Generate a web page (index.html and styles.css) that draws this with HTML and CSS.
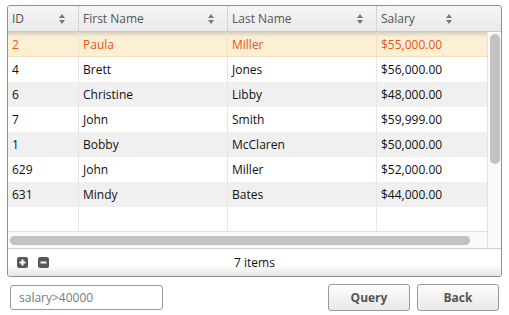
FILE: index.html
```html
<!DOCTYPE html>
<html lang="en">
<head>
    <meta charset="UTF-8">
    <title>Employees</title>
    <link rel="stylesheet" href="styles.css">
</head>
<body>

<div class="grid">
    <div class="grid-header">
        <div class="cell col-id">ID <span class="sort"></span></div>
        <div class="cell col-first">First Name <span class="sort"></span></div>
        <div class="cell col-last">Last Name <span class="sort"></span></div>
        <div class="cell col-salary last">Salary <span class="sort"></span></div>
    </div>
    <div class="grid-body">
        <div class="rows">
            <div class="row selected">
                <div class="cell col-id">2</div>
                <div class="cell col-first">Paula</div>
                <div class="cell col-last">Miller</div>
                <div class="cell col-salary">$55,000.00</div>
            </div>
            <div class="row">
                <div class="cell col-id">4</div>
                <div class="cell col-first">Brett</div>
                <div class="cell col-last">Jones</div>
                <div class="cell col-salary">$56,000.00</div>
            </div>
            <div class="row alt">
                <div class="cell col-id">6</div>
                <div class="cell col-first">Christine</div>
                <div class="cell col-last">Libby</div>
                <div class="cell col-salary">$48,000.00</div>
            </div>
            <div class="row">
                <div class="cell col-id">7</div>
                <div class="cell col-first">John</div>
                <div class="cell col-last">Smith</div>
                <div class="cell col-salary">$59,999.00</div>
            </div>
            <div class="row alt">
                <div class="cell col-id">1</div>
                <div class="cell col-first">Bobby</div>
                <div class="cell col-last">McClaren</div>
                <div class="cell col-salary">$50,000.00</div>
            </div>
            <div class="row">
                <div class="cell col-id">629</div>
                <div class="cell col-first">John</div>
                <div class="cell col-last">Miller</div>
                <div class="cell col-salary">$52,000.00</div>
            </div>
            <div class="row alt">
                <div class="cell col-id">631</div>
                <div class="cell col-first">Mindy</div>
                <div class="cell col-last">Bates</div>
                <div class="cell col-salary">$44,000.00</div>
            </div>
            <div class="row empty">
                <div class="cell col-id"></div>
                <div class="cell col-first"></div>
                <div class="cell col-last"></div>
                <div class="cell col-salary"></div>
            </div>
            <div class="hscroll"><div class="hthumb"></div></div>
        </div>
        <div class="vscroll"><div class="vthumb"></div></div>
    </div>
    <div class="grid-footer">
        <div class="tools">
            <span class="tool">
                <svg width="11" height="11" viewBox="0 0 11 11"><rect width="11" height="11" rx="2" fill="#595959"/><path d="M5.5 2.5v6M2.5 5.5h6" stroke="#fff" stroke-width="2"/></svg>
            </span>
            <span class="tool">
                <svg width="11" height="11" viewBox="0 0 11 11"><rect width="11" height="11" rx="2" fill="#595959"/><path d="M2.5 5.5h6" stroke="#fff" stroke-width="2"/></svg>
            </span>
        </div>
        <div class="count">7 items</div>
    </div>
</div>

<div class="bottom-bar">
    <input type="text" class="query-input" placeholder="salary&gt;40000">
    <div class="actions">
        <button class="btn">Query</button>
        <button class="btn">Back</button>
    </div>
</div>

</body>
</html>
```

FILE: styles.css
```css
body {
    margin: 0;
    padding: 5px 7px 0 7px;
    font-family: "Open Sans", Arial, sans-serif;
    font-size: 12px;
    color: #111;
    background-color: #fff;
}
.grid {
    width: 493px;
    border: 1px solid #8f8f8f;
    border-radius: 3px;
    background-color: #fff;
}
.grid-header {
    display: flex;
    height: 25px;
    background: linear-gradient(#f6f6f6, #e9e9e9);
    border-bottom: 1px solid #c9c9c9;
    border-radius: 3px 3px 0 0;
}
.grid-header .cell {
    display: flex;
    align-items: center;
    justify-content: space-between;
    color: #555;
    padding: 0 13px 0 4px;
    border-right: 1px solid #d4d4d4;
}
.grid-header .last {
    width: 88px;
    border-right: none;
}
.cell {
    box-sizing: border-box;
    padding-left: 4px;
}
.col-id { width: 71px; }
.col-first { width: 149px; }
.col-last { width: 149px; }
.col-salary { width: 110px; }
.sort {
    width: 6px;
    height: 10px;
    position: relative;
}
.sort::before,
.sort::after {
    content: "";
    position: absolute;
    left: 0;
    border-left: 3px solid transparent;
    border-right: 3px solid transparent;
}
.sort::before {
    top: 0;
    border-bottom: 4px solid #777;
}
.sort::after {
    bottom: 0;
    border-top: 4px solid #777;
}
.grid-body {
    display: flex;
}
.rows {
    width: 479px;
}
.row {
    display: flex;
    height: 25px;
    align-items: center;
    background-color: #fff;
}
.row .cell {
    height: 100%;
    display: flex;
    align-items: center;
    border-right: 1px solid #e6e6e6;
}
.row .col-salary {
    border-right: none;
}
.row.alt {
    background-color: #f0f0f0;
}
.row.selected {
    background: linear-gradient(#d6cfbf, #fcefd6 5px);
    color: #e8590c;
    border-bottom: 1px solid #f5dfb5;
    height: 24px;
}
.row.selected .cell {
    border-right-color: #f0e2c8;
}
.row.empty {
    height: 24px;
    border-bottom: 1px solid #e0e0e0;
}
.hscroll {
    height: 16px;
    padding: 4px 17px 0 2px;
    box-sizing: border-box;
    background-color: #f9f9f9;
}
.hthumb {
    height: 9px;
    border-radius: 5px;
    background-color: #c2c2c2;
}
.vscroll {
    width: 14px;
    border-left: 1px solid #e2e2e2;
    box-sizing: border-box;
    padding: 2px 1px 0 2px;
    background-color: #fafafa;
}
.vthumb {
    height: 130px;
    border-radius: 5px;
    background-color: #c2c2c2;
}
.grid-footer {
    display: flex;
    align-items: center;
    height: 27px;
    border-top: 1px solid #cfcfcf;
    background: linear-gradient(#fff 60%, #e4e4e4);
    border-radius: 0 0 3px 3px;
    position: relative;
}
.tools {
    display: flex;
    gap: 10px;
    padding-left: 9px;
}
.tool svg {
    display: block;
}
.count {
    position: absolute;
    left: 0;
    right: 0;
    text-align: center;
    pointer-events: none;
}
.bottom-bar {
    display: flex;
    justify-content: space-between;
    align-items: center;
    margin-top: 7px;
    padding: 0 3px;
}
.query-input {
    width: 153px;
    height: 25px;
    box-sizing: border-box;
    border: 1px solid #9a9a9a;
    border-radius: 3px;
    padding: 0 8px;
    font-family: "Open Sans", Arial, sans-serif;
    font-size: 12px;
}
.query-input::placeholder {
    color: #7a7a7a;
}
.actions {
    display: flex;
    gap: 7px;
}
.btn {
    width: 82px;
    height: 27px;
    border: 1px solid #9a9a9a;
    border-radius: 3px;
    background: linear-gradient(#fdfdfd, #e9e9e9);
    font-family: "Open Sans", Arial, sans-serif;
    font-size: 12px;
    font-weight: bold;
    color: #555;
    cursor: pointer;
}
```
